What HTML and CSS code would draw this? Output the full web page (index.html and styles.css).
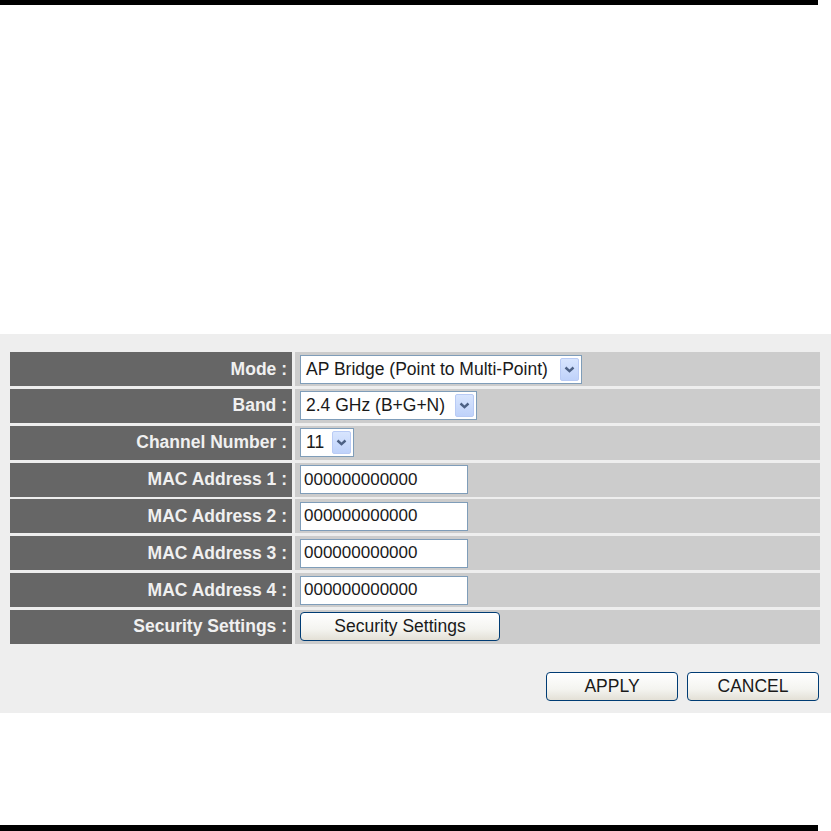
FILE: index.html
```html
<!DOCTYPE html>
<html lang="en">
<head>
  <meta charset="UTF-8" />
  <title>Wireless Settings</title>
  <link rel="stylesheet" href="styles.css">
</head>
<body>
  <div class="page">
    <div class="rule"></div>

    <form class="panel">
      <div class="settings">
        <div class="label">Mode :</div>
        <div class="value">
          <div class="select select-mode">
            <span class="select-text">AP Bridge (Point to Multi-Point)</span>
            <span class="select-arrow"><svg width="11" height="7" viewBox="0 0 11 7"><path d="M1.5 1.5 L5.5 5.2 L9.5 1.5" fill="none" stroke="#4d6185" stroke-width="2.4"/></svg></span>
          </div>
        </div>

        <div class="label">Band :</div>
        <div class="value">
          <div class="select select-band">
            <span class="select-text">2.4 GHz (B+G+N)</span>
            <span class="select-arrow"><svg width="11" height="7" viewBox="0 0 11 7"><path d="M1.5 1.5 L5.5 5.2 L9.5 1.5" fill="none" stroke="#4d6185" stroke-width="2.4"/></svg></span>
          </div>
        </div>

        <div class="label">Channel Number :</div>
        <div class="value">
          <div class="select select-channel">
            <span class="select-text">11</span>
            <span class="select-arrow"><svg width="11" height="7" viewBox="0 0 11 7"><path d="M1.5 1.5 L5.5 5.2 L9.5 1.5" fill="none" stroke="#4d6185" stroke-width="2.4"/></svg></span>
          </div>
        </div>

        <div class="label">MAC Address 1 :</div>
        <div class="value"><input class="mac" type="text" value="000000000000"></div>

        <div class="label">MAC Address 2 :</div>
        <div class="value"><input class="mac" type="text" value="000000000000"></div>

        <div class="label">MAC Address 3 :</div>
        <div class="value"><input class="mac" type="text" value="000000000000"></div>

        <div class="label">MAC Address 4 :</div>
        <div class="value"><input class="mac" type="text" value="000000000000"></div>

        <div class="label">Security Settings :</div>
        <div class="value"><button type="button" class="btn btn-security">Security Settings</button></div>
      </div>

      <div class="actions">
        <button type="button" class="btn btn-action">APPLY</button>
        <button type="button" class="btn btn-action">CANCEL</button>
      </div>
    </form>

    <div class="rule rule-bottom"></div>
  </div>
</body>
</html>
```

FILE: styles.css
```css
* { box-sizing: border-box; }
body {
  margin: 0;
  background: #ffffff;
  font-family: "Liberation Sans", Arial, sans-serif;
  color: #000000;
}
.page {
  display: flex;
  flex-direction: column;
  height: 831px;
}
.rule {
  width: 818px;
  height: 5px;
  background: #000000;
}
.rule-bottom {
  margin-top: auto;
  height: 6px;
}
.panel {
  margin-top: 329px;
  background: #eeeeee;
  padding: 18px 11px 12px 10px;
}
.settings {
  display: grid;
  grid-template-columns: 282px 1fr;
  grid-auto-rows: 34px;
  column-gap: 3px;
  row-gap: 2.85px;
}
.label {
  background: #666666;
  color: #f0f0f0;
  font-weight: 700;
  font-size: 17.5px;
  padding-right: 5px;
  display: flex;
  align-items: center;
  justify-content: flex-end;
}
.value {
  background: #cccccc;
  padding-left: 5px;
  display: flex;
  align-items: center;
}
.select {
  display: flex;
  align-items: center;
  height: 29px;
  background: #ffffff;
  border: 1px solid #7f9db9;
  padding: 2px 2px 2px 5px;
  font-size: 17.5px;
  color: #1a1a1a;
}
.select-text { flex: 1; white-space: nowrap; }
.select-mode { width: 282px; }
.select-band { width: 177px; }
.select-channel { width: 54px; }
.select-arrow {
  width: 19px;
  height: 23px;
  margin-left: 5px;
  border: 1px solid #b9cbf5;
  border-radius: 2px;
  background: linear-gradient(#d8e5fe, #bfd2fa);
  display: flex;
  align-items: center;
  justify-content: center;
}
.mac {
  width: 168px;
  height: 29px;
  margin: 0;
  border: 1px solid #7f9db9;
  padding: 0 3px;
  font-family: "Liberation Sans", Arial, sans-serif;
  font-size: 17px;
  color: #1a1a1a;
  background: #ffffff;
}
.btn {
  height: 29px;
  margin: 0;
  border: 1px solid #003c74;
  border-radius: 4px;
  background: linear-gradient(#ffffff 0%, #f4f4f0 60%, #e3e0d6 100%);
  font-family: "Liberation Sans", Arial, sans-serif;
  font-size: 17.5px;
  color: #1a1a1a;
  padding: 0;
}
.btn-security { width: 200px; }
.actions {
  display: flex;
  justify-content: flex-end;
  gap: 9px;
  margin-top: 28px;
  padding-right: 1px;
}
.btn-action { width: 132px; }
```
